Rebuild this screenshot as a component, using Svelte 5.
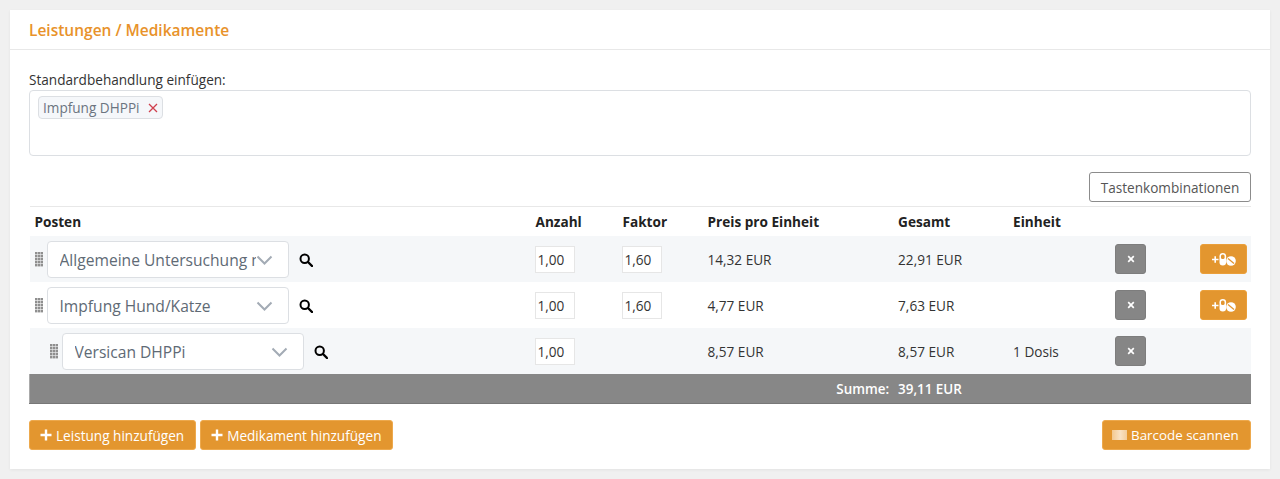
<script>
  const rows = [
    { name: 'Allgemeine Untersuchung mit Beratung', qty: '1,00', factor: '1,60', price: '14,32 EUR', total: '22,91 EUR', unit: '', add: true, child: false },
    { name: 'Impfung Hund/Katze', qty: '1,00', factor: '1,60', price: '4,77 EUR', total: '7,63 EUR', unit: '', add: true, child: false },
    { name: 'Versican DHPPi', qty: '1,00', factor: null, price: '8,57 EUR', total: '8,57 EUR', unit: '1 Dosis', add: false, child: true }
  ];
  const dots = [];
  for (let y = 0; y < 5; y++) for (let x = 0; x < 3; x++) dots.push([x * 2.8, y * 3]);
</script>

<div class="card">
  <h2 class="title">Leistungen / Medikamente</h2>
  <div class="body">
    <div class="label">Standardbehandlung einfügen:</div>
    <div class="tagbox">
      <span class="tag">Impfung DHPPi
        <svg class="tagx" width="10" height="10" viewBox="0 0 10 10"><path d="M1 1l8 8M9 1l-8 8" stroke="#d0404e" stroke-width="1.3" fill="none"/></svg>
      </span>
    </div>
    <div class="toolbar"><button class="outline">Tastenkombinationen</button></div>
    <table>
      <colgroup>
        <col class="c1" /><col class="c2" /><col class="c3" /><col class="c4" /><col class="c5" /><col class="c6" /><col class="c7" /><col />
      </colgroup>
      <thead>
        <tr>
          <th>Posten</th><th>Anzahl</th><th>Faktor</th><th>Preis pro Einheit</th><th>Gesamt</th><th>Einheit</th><th></th><th></th>
        </tr>
      </thead>
      <tbody>
        {#each rows as r}
          <tr>
            <td>
              <div class="posten" class:child={r.child}>
                <svg class="grip" width="8" height="15" viewBox="0 0 8 15">
                  {#each dots as d}<rect x={d[0]} y={d[1]} width="2.4" height="2.4" fill="#8f8f8f" />{/each}
                </svg>
                <div class="select">
                  <span class="selname">{r.name}</span>
                  <svg class="chev" width="17" height="10" viewBox="0 0 17 10"><path d="M1.5 1.5l7 7 7-7" stroke="#a3abb5" stroke-width="2" fill="none"/></svg>
                </div>
                <svg class="search" width="14" height="14" viewBox="0 0 14 14"><circle cx="5.7" cy="5.7" r="4.2" stroke="#000" stroke-width="2" fill="none"/><path d="M9 9l4 4" stroke="#000" stroke-width="2.4" stroke-linecap="round"/></svg>
              </div>
            </td>
            <td><div class="num">{r.qty}</div></td>
            <td>{#if r.factor}<div class="num">{r.factor}</div>{/if}</td>
            <td>{r.price}</td>
            <td>{r.total}</td>
            <td>{r.unit}</td>
            <td>
              <button class="del" aria-label="Entfernen"><svg width="8" height="8" viewBox="0 0 8 8"><path d="M1.2 1.2l5.6 5.6M6.8 1.2l-5.6 5.6" stroke="#fff" stroke-width="1.7"/></svg></button>
            </td>
            <td>
              {#if r.add}
                <button class="addmed" aria-label="Medikament hinzufügen">
                  <svg width="24" height="15" viewBox="0 0 24 15">
                    <path d="M0 7.5h6.5M3.2 4.2v6.6" stroke="#fff" stroke-width="1.6"/>
                    <rect x="7.5" y="1" width="6.6" height="12.5" rx="3.3" fill="#fff"/>
                    <rect x="9" y="2.5" width="3.6" height="4.5" rx="1.6" fill="#e3962f"/>
                    <circle cx="19" cy="9" r="4.8" fill="#fff"/>
                    <path d="M16 6.4l6 5" stroke="#e3962f" stroke-width="1.3"/>
                  </svg>
                </button>
              {/if}
            </td>
          </tr>
        {/each}
      </tbody>
      <tfoot>
        <tr>
          <td colspan="3"></td>
          <td class="sumlabel">Summe:</td>
          <td>39,11 EUR</td>
          <td colspan="3"></td>
        </tr>
      </tfoot>
    </table>
    <div class="actions">
      <div class="left">
        <button class="orange"><svg width="12" height="12" viewBox="0 0 12 12"><path d="M6 0.5v11M0.5 6h11" stroke="#fff" stroke-width="2.4"/></svg>Leistung hinzufügen</button>
        <button class="orange"><svg width="12" height="12" viewBox="0 0 12 12"><path d="M6 0.5v11M0.5 6h11" stroke="#fff" stroke-width="2.4"/></svg>Medikament hinzufügen</button>
      </div>
      <button class="orange scan"><span class="barcode"></span>Barcode scannen</button>
    </div>
  </div>
</div>

<style>
  :global(body) {
    margin: 0;
    background: #f0f0f0;
    font-family: "Open Sans", "Liberation Sans", sans-serif;
    font-size: 13.6px;
    color: #333;
  }
  .card {
    margin: 10px;
    height: 459px;
    background: #fff;
    box-shadow: 0 1px 3px rgba(0, 0, 0, 0.06);
    box-sizing: border-box;
  }
  .title {
    margin: 0;
    height: 40px;
    box-sizing: border-box;
    padding: 0 19px;
    border-bottom: 1px solid #e8e8e8;
    font-size: 15.5px;
    line-height: 40px;
    font-weight: 600;
    color: #e8922a;
  }
  .body { padding: 21px 19px 0; }
  .label { height: 19px; line-height: 18px; color: #333; }
  .tagbox {
    height: 66px;
    box-sizing: border-box;
    border: 1px solid #dcdfe3;
    border-radius: 4px;
    padding: 5px 8px;
  }
  .tag {
    display: inline-flex;
    align-items: center;
    height: 23px;
    box-sizing: border-box;
    padding: 0 4px;
    border: 1px solid #dcdfe3;
    border-radius: 4px;
    background: #f5f7fa;
    color: #6b7480;
    line-height: 21px;
  }
  .tagx { margin-left: 8px; margin-right: 0; }
  .toolbar { display: flex; justify-content: flex-end; margin-top: 16px; height: 34px; align-items: flex-start; }
  button { font-family: inherit; font-size: 13.6px; cursor: pointer; box-sizing: border-box; }
  .outline {
    width: 162px;
    height: 30px;
    padding: 0;
    border: 1px solid #8c8c8c;
    border-radius: 3px;
    background: #fff;
    color: #555;
  }
  table {
    width: 1222px;
    border-collapse: collapse;
    table-layout: fixed;
    color: #333;
  }
  .c1 { width: 501px; }
  .c2 { width: 87px; }
  .c3 { width: 85px; }
  .c4 { width: 190.6px; }
  .c5 { width: 115px; }
  .c6 { width: 102.4px; }
  .c7 { width: 84.6px; }
  thead tr { height: 29px; border-top: 1px solid #e8e8e8; }
  th {
    text-align: left;
    font-weight: 700;
    color: #222;
    padding: 1px 0 0 5px;
    line-height: 27px;
  }
  tbody tr { height: 46px; }
  tbody tr:nth-child(odd) { background: #f5f7f9; }
  td { padding: 0 0 0 5px; }
  tbody td { padding-top: 2px; }
  .posten { display: flex; align-items: center; }
  .posten.child { padding-left: 15px; }
  .grip { margin-right: 4px; flex: none; }
  .select {
    position: relative;
    width: 242px;
    height: 37px;
    flex: none;
    box-sizing: border-box;
    border: 1px solid #dcdfe3;
    border-radius: 4px;
    background: #fff;
    padding: 0 46px 0 12px;
    color: #606a75;
    font-size: 15.6px;
    line-height: 36px;
    overflow: hidden;
    white-space: nowrap;
  }
  .selname { display: block; overflow: hidden; margin-right: -14px; }
  .chev { position: absolute; right: 15px; top: 13px; }
  .search { margin-left: 10px; flex: none; }
  .num {
    width: 40px;
    height: 27px;
    box-sizing: border-box;
    border: 1px solid #e6e6e6;
    background: #fff;
    padding-left: 2px;
    margin: 0 0 0 -1px;
    line-height: 25px;
    font-size: 13.6px;
    color: #333;
  }
  .del, .addmed {
    display: flex;
    align-items: center;
    justify-content: center;
    height: 30px;
    padding: 0;
    border-radius: 3px;
    margin: -1px 0 0;
  }
  .del { width: 31px; background: #868686; border: 1px solid #7d7d7d; }
  .addmed { width: 47px; background: #e3962f; border: 1px solid #ea9f3a; }
  tfoot tr { height: 30px; background: #878787; color: #fff; font-weight: 600; font-size: 13.4px; border-bottom: 1px solid #777; border-left: 1px solid #aaa; }
  tfoot td { line-height: 26px; padding-top: 2px; }
  .sumlabel { text-align: right; padding-right: 4px; }
  .actions { display: flex; justify-content: space-between; margin-top: 16px; }
  .left { display: flex; gap: 4px; }
  .orange {
    display: inline-flex;
    align-items: center;
    justify-content: center;
    height: 30px;
    padding: 0 11px 0 10px;
    border: 1px solid #eda94d;
    border-radius: 3px;
    background: #e3962f;
    color: #fff;
    font-weight: 500;
    font-size: 13.6px;
    gap: 4px;
  }
  .scan { width: 149px; padding: 0 0 0 9px; justify-content: flex-start; font-size: 13.4px; }
  .barcode {
    display: inline-block;
    width: 15px;
    height: 10px;
    background: linear-gradient(90deg, #f3c88f, #f9e2c5 55%, #f3cd9c);
  }
</style>
